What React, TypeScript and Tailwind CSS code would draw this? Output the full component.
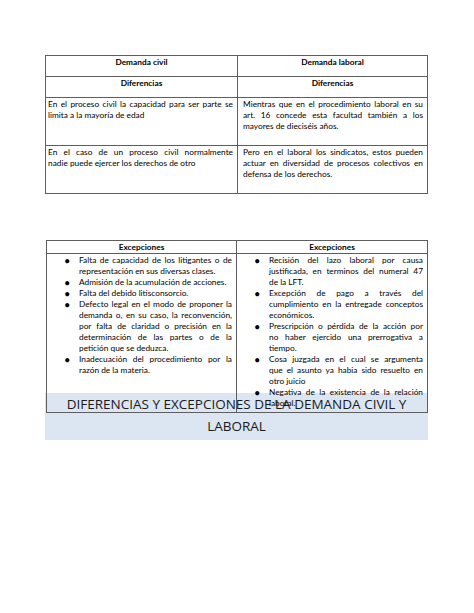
const civil = [
  ["En el proceso civil la capacidad para ser parte se", "limita a la mayoría de edad"],
  ["En el caso de un proceso civil normalmente", "nadie puede ejercer los derechos de otro"],
];

const laboral = [
  [
    "Mientras que en el procedimiento laboral en su",
    "art. 16 concede esta facultad también a los",
    "mayores de dieciséis años.",
  ],
  [
    "Pero en el laboral los sindicatos, estos pueden",
    "actuar en diversidad de procesos colectivos en",
    "defensa de los derechos.",
  ],
];

const excCivil = [
  ["Falta de capacidad de los litigantes o de", "representación en sus diversas clases."],
  ["Admisión de la acumulación de acciones."],
  ["Falta del debido litisconsorcio."],
  [
    "Defecto legal en el modo de proponer la",
    "demanda o, en su caso, la reconvención,",
    "por falta de claridad o precisión en la",
    "determinación de las partes o de la",
    "petición que se deduzca.",
  ],
  ["Inadecuación del procedimiento por la", "razón de la materia."],
];

const excLaboral = [
  [
    "Recisión del lazo laboral por causa",
    "justificada, en terminos del numeral 47",
    "de la LFT.",
  ],
  [
    "Excepción de pago a través del",
    "cumplimiento en la entregade conceptos",
    "económicos.",
  ],
  [
    "Prescripción o pérdida de la acción por",
    "no haber ejercido una prerrogativa a",
    "tiempo.",
  ],
  [
    "Cosa juzgada en el cual se argumenta",
    "que el asunto ya habia sido resuelto en",
    "otro juicio",
  ],
  ["Negativa de la existencia de la relación", "laboral."],
];

// each line is its own block so breaks match the document
const Lines = ({ lines }: { lines: string[] }) => (
  <>
    {lines.map((l, i) => (
      <div
        key={i}
        className={
          i < lines.length - 1
            ? "whitespace-nowrap text-justify [text-align-last:justify]"
            : "whitespace-nowrap"
        }
      >
        {l}
      </div>
    ))}
  </>
);

const BulletList = ({ items }: { items: string[][] }) => (
  <div className="pt-[1px] pb-1 pr-[4px]">
    {items.map((item, i) => (
      <div key={i} className="flex">
        <div className="w-[32px] shrink-0 pl-[17px] text-[11px] leading-[11px]">•</div>
        <div className="flex-1">
          <Lines lines={item} />
        </div>
      </div>
    ))}
  </div>
);

export default function App() {
  return (
    <div className="relative w-[474px] h-[613px] bg-white overflow-hidden font-['Lato',sans-serif] text-[8.3px] leading-[11px] text-black">
      {/* TITLE BANNER */}
      <div className="absolute left-[45px] top-[393px] w-[383px] h-[47px] bg-[#dce6f2] text-center font-['Open_Sans',sans-serif] text-[13.5px] leading-[22px] text-[#1a1a1a]">
        <div>DIFERENCIAS Y EXCEPCIONES DE LA DEMANDA CIVIL Y</div>
        <div>LABORAL</div>
      </div>

      <div className="relative pt-[55px] pl-[45px]">
        {/* TABLE 1 */}
        <div className="w-[383px] border border-[#5e5e5e]">
          <div className="grid grid-cols-[192px_1fr] h-[21px] border-b border-[#5e5e5e] font-bold text-center">
            <div className="border-r border-[#5e5e5e] pt-[1px]">Demanda civil</div>
            <div className="pt-[1px]">Demanda laboral</div>
          </div>
          <div className="grid grid-cols-[192px_1fr] h-[21px] border-b border-[#5e5e5e] font-bold text-center">
            <div className="border-r border-[#5e5e5e] pt-[1px]">Diferencias</div>
            <div className="pt-[1px]">Diferencias</div>
          </div>
          {civil.map((c, i) => (
            <div
              key={i}
              className={
                i === 0
                  ? "grid grid-cols-[192px_1fr] h-[48px] border-b border-[#5e5e5e]"
                  : "grid grid-cols-[192px_1fr] h-[47px]"
              }
            >
              <div className="border-r border-[#5e5e5e] pt-[1px] pl-[2px] pr-[4px]">
                <Lines lines={c} />
              </div>
              <div className="pt-[1px] pl-[5px] pr-[4px]">
                <Lines lines={laboral[i]} />
              </div>
            </div>
          ))}
        </div>

        {/* TABLE 2 */}
        <div className="mt-[46px] w-[382px] h-[173px] border border-[#5e5e5e] ml-[1px] flex flex-col">
          <div className="grid grid-cols-[190px_1fr] h-[13px] border-b border-[#5e5e5e] font-bold text-center leading-[12px]">
            <div className="border-r border-[#5e5e5e]">Excepciones</div>
            <div>Excepciones</div>
          </div>
          <div className="grid grid-cols-[190px_1fr] flex-1">
            <div className="border-r border-[#5e5e5e]">
              <BulletList items={excCivil} />
            </div>
            <div>
              <BulletList items={excLaboral} />
            </div>
          </div>
        </div>
      </div>
    </div>
  );
}
